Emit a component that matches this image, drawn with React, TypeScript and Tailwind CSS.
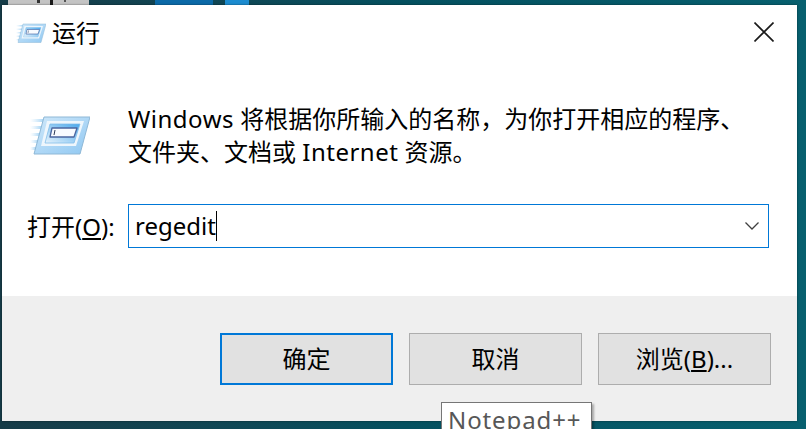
import { useId } from 'react'

const FONT = "font-['Noto_Sans','Noto_Sans_CJK_SC',sans-serif]"

// The Run icon: a skewed blue card with speed lines on its left
function RunIcon({ className }: { className: string }) {
  const id = useId()
  return (
    <svg viewBox="0 0 60 40" className={className}>
      <defs>
        <linearGradient id={`${id}line`} x1="0" x2="1" y1="0" y2="0">
          <stop offset="0" stopColor="#bfe0f8" stopOpacity="0" />
          <stop offset="1" stopColor="#8fcaf2" />
        </linearGradient>
        <linearGradient id={`${id}card`} x1="0" x2="1" y1="0" y2="1">
          <stop offset="0" stopColor="#cfe8fa" />
          <stop offset="1" stopColor="#90c8f2" />
        </linearGradient>
        <linearGradient id={`${id}mid`} x1="0" x2="1" y1="1" y2="0">
          <stop offset="0" stopColor="#e6f3fc" />
          <stop offset="1" stopColor="#4aa8ec" />
        </linearGradient>
      </defs>
      <g fill={`url(#${id}line)`}>
        <rect x="0" y="3" width="16" height="3" />
        <rect x="0" y="10" width="14" height="3" />
        <rect x="0" y="17" width="12" height="3" />
        <rect x="0" y="24" width="10" height="3" />
        <rect x="0" y="31" width="7" height="3" />
      </g>
      <path d="M14 1H60L50 38H4Z" fill={`url(#${id}card)`} stroke="#8fb8d6" strokeWidth="1" />
      <path d="M17 5H54L46 30H11Z" fill="#eef6fc" />
      <path d="M20 8H50L44 27H15Z" fill={`url(#${id}mid)`} stroke="#7ebbe8" strokeWidth="0.75" />
      <path d="M22 12H47L44 21H20Z" fill="#f8fbff" stroke="#4a66a0" strokeWidth="1.3" strokeLinejoin="round" />
      <path d="M25 14L24 19" stroke="#2c3a58" strokeWidth="1" />
    </svg>
  )
}

function DialogButton({ children, active }: { children: React.ReactNode; active?: boolean }) {
  return (
    <button
      className={
        'w-[173px] h-[52px] bg-[#e1e1e1] text-[24px] text-black flex items-center justify-center ' +
        (active ? 'border-2 border-[#0078d7]' : 'border border-[#adadad]')
      }
    >
      {children}
    </button>
  )
}

export default function App() {
  return (
    <div className={`${FONT} relative w-[806px] h-[429px] overflow-hidden flex flex-col bg-gradient-to-r from-[#163c48] via-[#04505f] to-[#07606f]`}>
      {/* bits of the desktop showing above the dialog */}
      <div className="h-[5px] flex shrink-0">
        <div className="ml-[8px] w-[81px] bg-[#c4c4c4] flex">
          <div className="ml-[29px] w-[3px] h-[3px] bg-[#333333]" />
          <div className="ml-[10px] w-[3px] bg-[#1a1a1a]" />
          <div className="ml-[11px] w-[2px] h-[2px] bg-[#555555]" />
        </div>
        <div className="ml-[66px] w-[58px] bg-[#0c6aa8]" />
        <div className="ml-[12px] w-[24px] bg-[#1c8cd0]" />
      </div>

      <div className="ml-[2px] mr-[9px] h-[416px] flex flex-col shrink-0 shadow-[0_0_2px_rgba(0,0,0,0.5)]">
        <div className="bg-white h-[291px] flex flex-col">
          {/* title bar */}
          <div className="h-[54px] flex items-center pl-[14px] pr-[23px]">
            <RunIcon className="w-[30px] h-[21px] mt-[2px]" />
            <span className="ml-[6px] mt-[2px] text-[24px] leading-none text-black">运行</span>
            <svg viewBox="0 0 20 20" className="ml-auto w-[20px] h-[20px] mb-[1px]" fill="none" stroke="#1a1a1a" strokeWidth="1.6">
              <path d="M0.5 0.5L19.5 19.5M19.5 0.5L0.5 19.5" />
            </svg>
          </div>

          {/* message */}
          <div className="flex mt-[4px]">
            <RunIcon className="ml-[28px] mt-[53px] w-[60px] h-[40px] shrink-0" />
            <p className="ml-[38px] mt-[39px] w-[660px] text-[24px] leading-[33px] text-black whitespace-nowrap">
              <span className="tracking-[0.5px]">Windows</span> 将根据你所输入的名称，为你打开相应的程序、
              <br />
              文件夹、文档或 <span className="tracking-[0.5px]">Internet</span> 资源。
            </p>
          </div>

          {/* open row */}
          <div className="flex items-center mt-[36px]">
            <span className="ml-[25px] mt-[2px] w-[101px] text-[24px] text-black whitespace-nowrap">
              打开(<span className="underline">O</span>):
            </span>
            <div className="w-[641px] h-[44px] border border-[#0078d7] flex items-center pl-[6px] pr-[9px]">
              <span className="text-[24px] text-black leading-none">regedit</span>
              <span className="w-px h-[30px] bg-black" />
              <svg viewBox="0 0 14 8" className="ml-auto w-[14px] h-[8px]" fill="none" stroke="#404040" strokeWidth="1.3">
                <path d="M0.5 0.5L7 7L13.5 0.5" />
              </svg>
            </div>
          </div>
        </div>

        {/* button strip */}
        <div className="bg-[#efefef] h-[125px] flex justify-end gap-[16px] pt-[37px] pr-[26px]">
          <DialogButton active>确定</DialogButton>
          <DialogButton>取消</DialogButton>
          <DialogButton>
            浏览(<span className="underline">B</span>)...
          </DialogButton>
        </div>
      </div>

      {/* tooltip hanging off the bottom of the shot */}
      <div className="absolute left-[441px] top-[402px] w-[151px] h-[27px] overflow-hidden bg-white border border-b-0 border-[#767676] shadow-[2px_2px_2px_rgba(0,0,0,0.3)] pl-[6px] text-[24px] leading-[34px] text-[#575757] whitespace-nowrap tracking-[0.9px]">
        Notepad++
      </div>
    </div>
  )
}
